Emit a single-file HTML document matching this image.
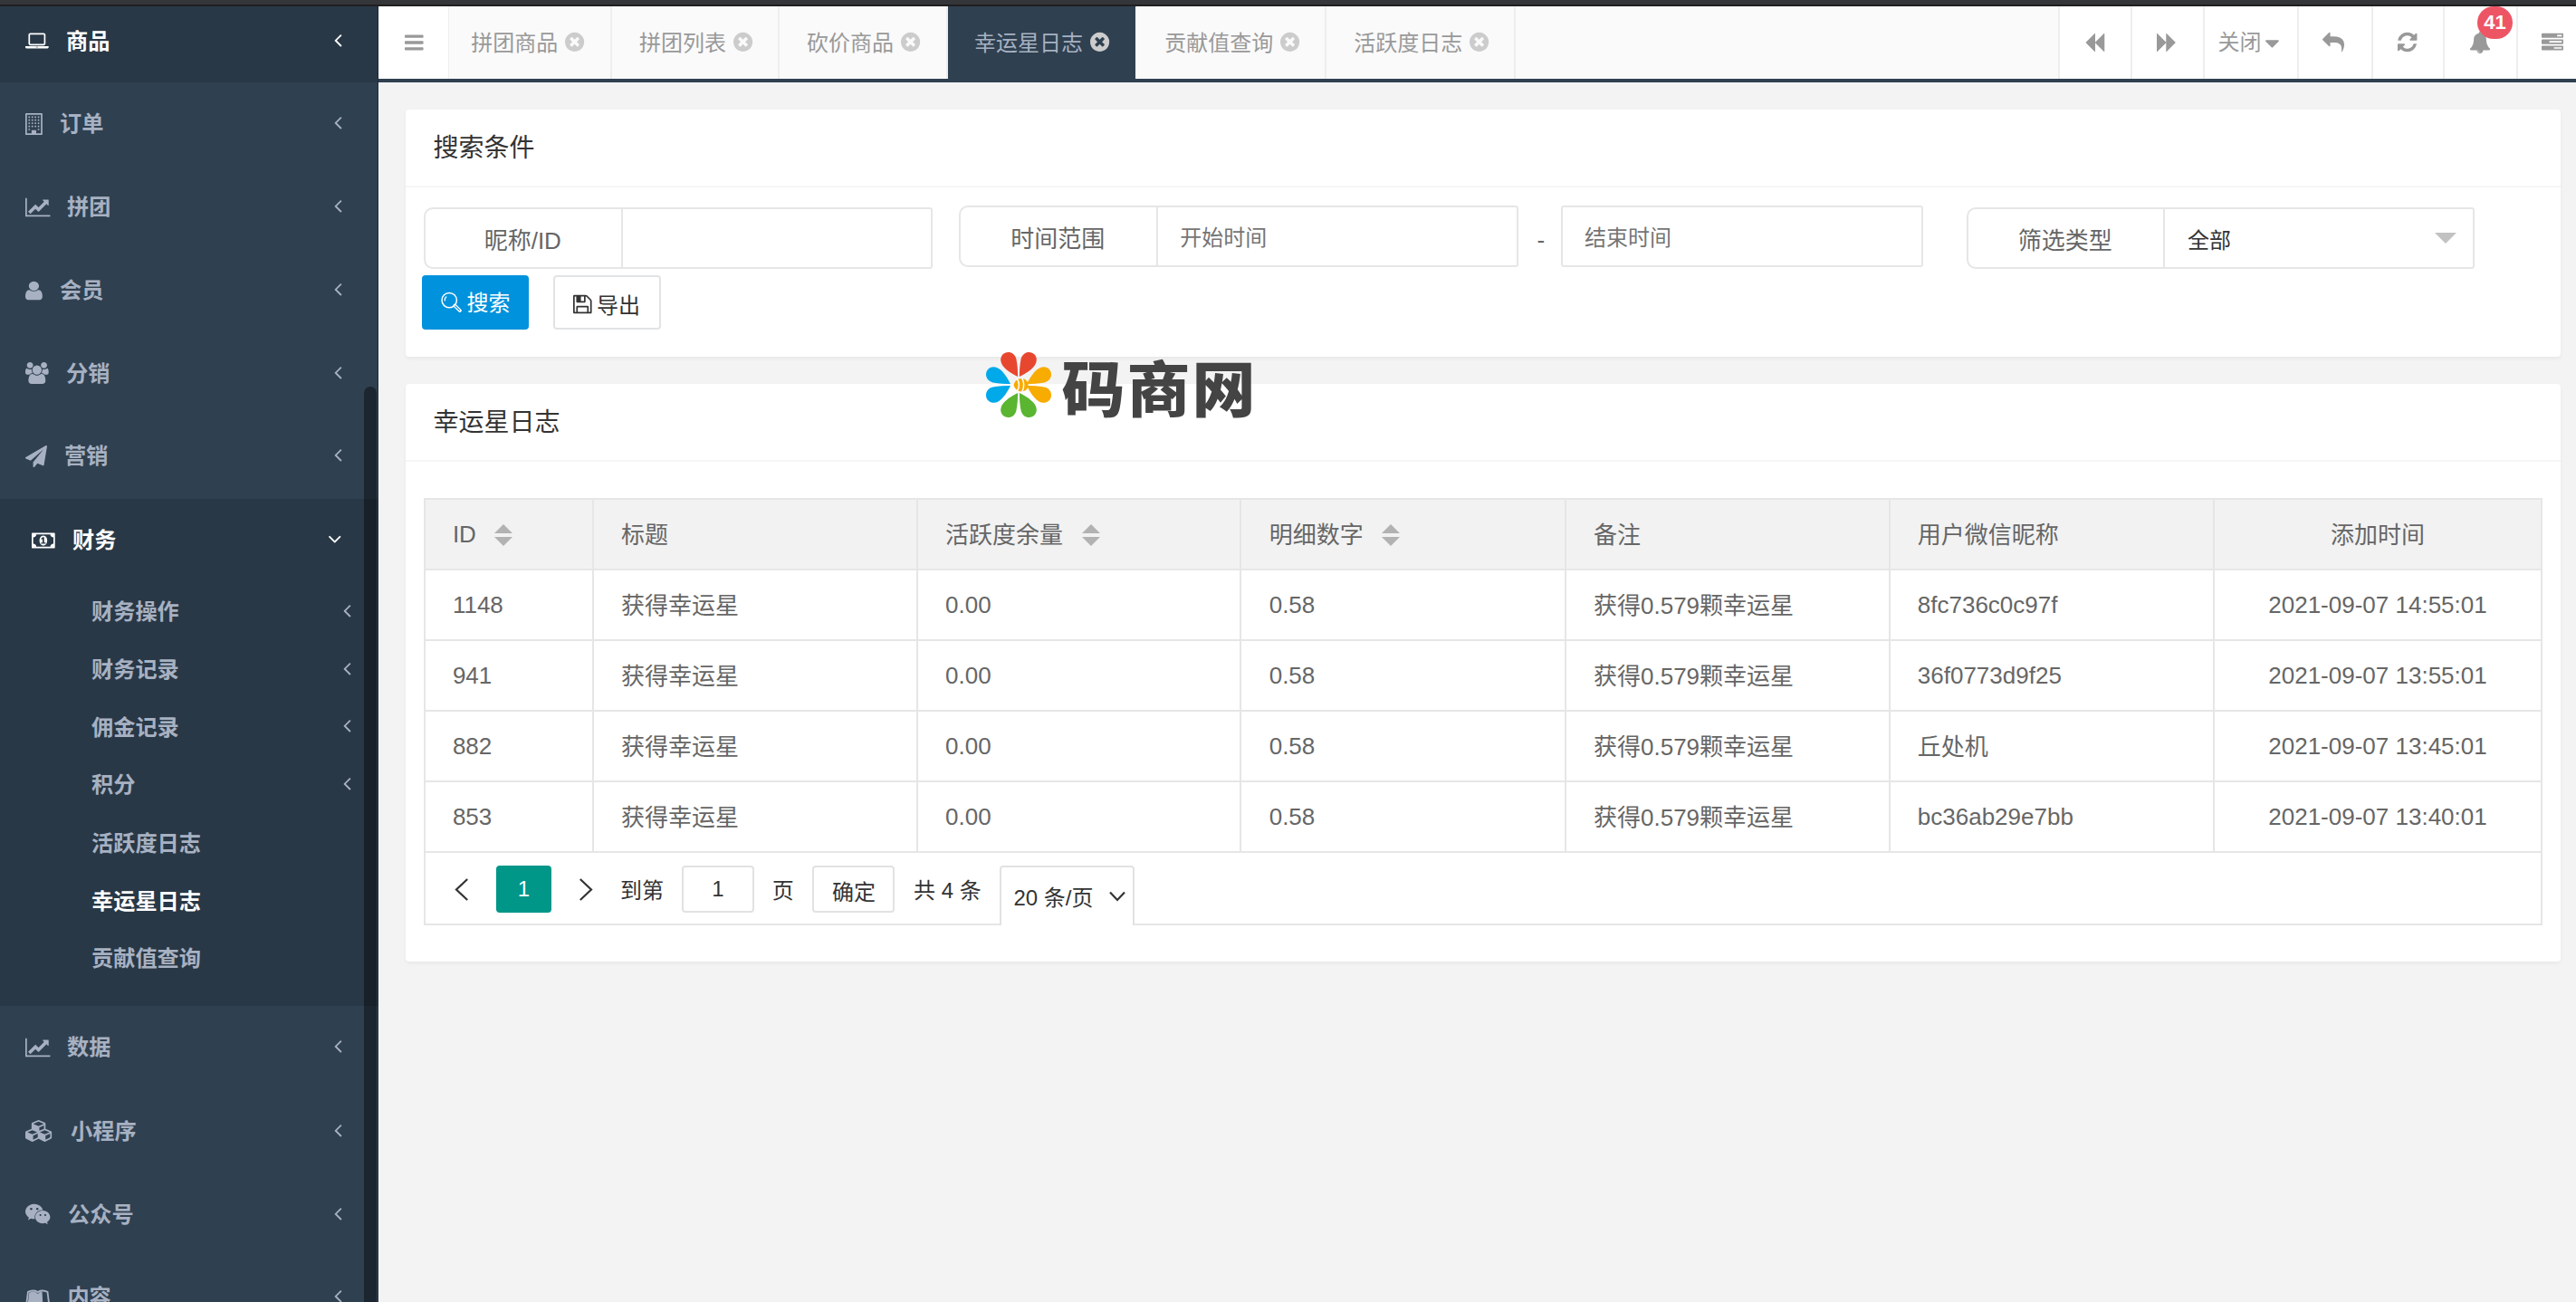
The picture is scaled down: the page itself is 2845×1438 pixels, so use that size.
<!DOCTYPE html>
<html lang="zh-CN"><head><meta charset="utf-8"><title>幸运星日志</title><style>
html,body{margin:0;padding:0;}
body{width:2845px;height:1438px;overflow:hidden;position:relative;background:#f3f3f4;font-family:"Liberation Sans","Noto Sans CJK SC",sans-serif;}
.b{position:absolute;}
.t{position:absolute;white-space:nowrap;margin:0;}
.bold{font-weight:bold;}
.ic{position:absolute;display:block;overflow:visible;}
</style></head><body>
<div class="b" style="left:0.0px;top:0.0px;width:2845.0px;height:7.0px;background:#1f1f1f;"></div>
<div class="b" style="left:0.0px;top:0.0px;width:2845.0px;height:5.1px;background:#35363a;"></div>
<div class="b" id="side" style="left:0;top:7px;width:418px;height:1431px;background:#2f4050;">
</div>
<div class="b" style="left:0.0px;top:7.0px;width:418.0px;height:84.0px;background:#293846;"></div>
<div class="b" style="left:0.0px;top:551.0px;width:418.0px;height:559.6px;background:#293846;"></div>
<svg class="ic" style="left:28.0px;top:32.9px;width:25.71px;height:24.00px;" preserveAspectRatio="none" viewBox="0 0 1920 1792"><path fill="#fff" transform="translate(0,1536) scale(1,-1)" d="M416 256q-66 0 -113 47t-47 113v704q0 66 47 113t113 47h1088q66 0 113 -47t47 -113v-704q0 -66 -47 -113t-113 -47h-1088zM384 1120v-704q0 -13 9.5 -22.5t22.5 -9.5h1088q13 0 22.5 9.5t9.5 22.5v704q0 13 -9.5 22.5t-22.5 9.5h-1088q-13 0 -22.5 -9.5t-9.5 -22.5z M1760 192h160v-96q0 -40 -47 -68t-113 -28h-1600q-66 0 -113 28t-47 68v96h160h1600zM1040 96q16 0 16 16t-16 16h-160q-16 0 -16 -16t16 -16h160z"/></svg>
<div class="t bold" style="left:73.0px;top:27.5px;height:36px;line-height:36px;font-size:24.2px;color:#fff;">商品</div>
<svg class="ic" style="left:369.3px;top:31.5px;width:8.57px;height:24.00px;" preserveAspectRatio="none" viewBox="0 0 640 1792"><path fill="#fff" transform="translate(0,1536) scale(1,-1)" d="M627 992q0 -13 -10 -23l-393 -393l393 -393q10 -10 10 -23t-10 -23l-50 -50q-10 -10 -23 -10t-23 10l-466 466q-10 10 -10 23t10 23l466 466q10 10 23 10t23 -10l50 -50q10 -10 10 -23z"/></svg>
<svg class="ic" style="left:28.0px;top:124.8px;width:18.86px;height:24.00px;" preserveAspectRatio="none" viewBox="0 0 1408 1792"><path fill="#a7b1c2" transform="translate(0,1536) scale(1,-1)" d="M384 224v-64q0 -13 -9.5 -22.5t-22.5 -9.5h-64q-13 0 -22.5 9.5t-9.5 22.5v64q0 13 9.5 22.5t22.5 9.5h64q13 0 22.5 -9.5t9.5 -22.5zM384 480v-64q0 -13 -9.5 -22.5t-22.5 -9.5h-64q-13 0 -22.5 9.5t-9.5 22.5v64q0 13 9.5 22.5t22.5 9.5h64q13 0 22.5 -9.5t9.5 -22.5z M640 480v-64q0 -13 -9.5 -22.5t-22.5 -9.5h-64q-13 0 -22.5 9.5t-9.5 22.5v64q0 13 9.5 22.5t22.5 9.5h64q13 0 22.5 -9.5t9.5 -22.5zM384 736v-64q0 -13 -9.5 -22.5t-22.5 -9.5h-64q-13 0 -22.5 9.5t-9.5 22.5v64q0 13 9.5 22.5t22.5 9.5h64q13 0 22.5 -9.5t9.5 -22.5z M1152 224v-64q0 -13 -9.5 -22.5t-22.5 -9.5h-64q-13 0 -22.5 9.5t-9.5 22.5v64q0 13 9.5 22.5t22.5 9.5h64q13 0 22.5 -9.5t9.5 -22.5zM896 480v-64q0 -13 -9.5 -22.5t-22.5 -9.5h-64q-13 0 -22.5 9.5t-9.5 22.5v64q0 13 9.5 22.5t22.5 9.5h64q13 0 22.5 -9.5t9.5 -22.5z M640 736v-64q0 -13 -9.5 -22.5t-22.5 -9.5h-64q-13 0 -22.5 9.5t-9.5 22.5v64q0 13 9.5 22.5t22.5 9.5h64q13 0 22.5 -9.5t9.5 -22.5zM384 992v-64q0 -13 -9.5 -22.5t-22.5 -9.5h-64q-13 0 -22.5 9.5t-9.5 22.5v64q0 13 9.5 22.5t22.5 9.5h64q13 0 22.5 -9.5t9.5 -22.5z M1152 480v-64q0 -13 -9.5 -22.5t-22.5 -9.5h-64q-13 0 -22.5 9.5t-9.5 22.5v64q0 13 9.5 22.5t22.5 9.5h64q13 0 22.5 -9.5t9.5 -22.5zM896 736v-64q0 -13 -9.5 -22.5t-22.5 -9.5h-64q-13 0 -22.5 9.5t-9.5 22.5v64q0 13 9.5 22.5t22.5 9.5h64q13 0 22.5 -9.5t9.5 -22.5z M640 992v-64q0 -13 -9.5 -22.5t-22.5 -9.5h-64q-13 0 -22.5 9.5t-9.5 22.5v64q0 13 9.5 22.5t22.5 9.5h64q13 0 22.5 -9.5t9.5 -22.5zM384 1248v-64q0 -13 -9.5 -22.5t-22.5 -9.5h-64q-13 0 -22.5 9.5t-9.5 22.5v64q0 13 9.5 22.5t22.5 9.5h64q13 0 22.5 -9.5t9.5 -22.5z M1152 736v-64q0 -13 -9.5 -22.5t-22.5 -9.5h-64q-13 0 -22.5 9.5t-9.5 22.5v64q0 13 9.5 22.5t22.5 9.5h64q13 0 22.5 -9.5t9.5 -22.5zM896 992v-64q0 -13 -9.5 -22.5t-22.5 -9.5h-64q-13 0 -22.5 9.5t-9.5 22.5v64q0 13 9.5 22.5t22.5 9.5h64q13 0 22.5 -9.5t9.5 -22.5z M640 1248v-64q0 -13 -9.5 -22.5t-22.5 -9.5h-64q-13 0 -22.5 9.5t-9.5 22.5v64q0 13 9.5 22.5t22.5 9.5h64q13 0 22.5 -9.5t9.5 -22.5zM1152 992v-64q0 -13 -9.5 -22.5t-22.5 -9.5h-64q-13 0 -22.5 9.5t-9.5 22.5v64q0 13 9.5 22.5t22.5 9.5h64q13 0 22.5 -9.5t9.5 -22.5z M896 1248v-64q0 -13 -9.5 -22.5t-22.5 -9.5h-64q-13 0 -22.5 9.5t-9.5 22.5v64q0 13 9.5 22.5t22.5 9.5h64q13 0 22.5 -9.5t9.5 -22.5zM1152 1248v-64q0 -13 -9.5 -22.5t-22.5 -9.5h-64q-13 0 -22.5 9.5t-9.5 22.5v64q0 13 9.5 22.5t22.5 9.5h64q13 0 22.5 -9.5t9.5 -22.5z M896 -128h384v1536h-1152v-1536h384v224q0 13 9.5 22.5t22.5 9.5h320q13 0 22.5 -9.5t9.5 -22.5v-224zM1408 1472v-1664q0 -26 -19 -45t-45 -19h-1280q-26 0 -45 19t-19 45v1664q0 26 19 45t45 19h1280q26 0 45 -19t19 -45z"/></svg>
<div class="t bold" style="left:66.0px;top:119.4px;height:36px;line-height:36px;font-size:24.2px;color:#a7b1c2;">订单</div>
<svg class="ic" style="left:369.3px;top:123.4px;width:8.57px;height:24.00px;" preserveAspectRatio="none" viewBox="0 0 640 1792"><path fill="#a7b1c2" transform="translate(0,1536) scale(1,-1)" d="M627 992q0 -13 -10 -23l-393 -393l393 -393q10 -10 10 -23t-10 -23l-50 -50q-10 -10 -23 -10t-23 10l-466 466q-10 10 -10 23t10 23l466 466q10 10 23 10t23 -10l50 -50q10 -10 10 -23z"/></svg>
<svg class="ic" style="left:28.0px;top:216.5px;width:27.43px;height:24.00px;" preserveAspectRatio="none" viewBox="0 0 2048 1792"><path fill="#a7b1c2" transform="translate(0,1536) scale(1,-1)" d="M2048 0v-128h-2048v1536h128v-1408h1920zM1920 1248v-435q0 -21 -19.5 -29.5t-35.5 7.5l-121 121l-633 -633q-10 -10 -23 -10t-23 10l-233 233l-416 -416l-192 192l585 585q10 10 23 10t23 -10l233 -233l464 464l-121 121q-16 16 -7.5 35.5t29.5 19.5h435q14 0 23 -9 t9 -23z"/></svg>
<div class="t bold" style="left:74.0px;top:211.1px;height:36px;line-height:36px;font-size:24.2px;color:#a7b1c2;">拼团</div>
<svg class="ic" style="left:369.3px;top:215.1px;width:8.57px;height:24.00px;" preserveAspectRatio="none" viewBox="0 0 640 1792"><path fill="#a7b1c2" transform="translate(0,1536) scale(1,-1)" d="M627 992q0 -13 -10 -23l-393 -393l393 -393q10 -10 10 -23t-10 -23l-50 -50q-10 -10 -23 -10t-23 10l-466 466q-10 10 -10 23t10 23l466 466q10 10 23 10t23 -10l50 -50q10 -10 10 -23z"/></svg>
<svg class="ic" style="left:28.0px;top:308.5px;width:18.86px;height:24.00px;" preserveAspectRatio="none" viewBox="0 0 1280 1792"><path fill="#a7b1c2" transform="translate(0,1536) scale(1,-1)" d="M1280 137q0 -109 -62.5 -187t-150.5 -78h-854q-88 0 -150.5 78t-62.5 187q0 85 8.5 160.5t31.5 152t58.5 131t94 89t134.5 34.5q131 -128 313 -128t313 128q76 0 134.5 -34.5t94 -89t58.5 -131t31.5 -152t8.5 -160.5zM1024 1024q0 -159 -112.5 -271.5t-271.5 -112.5 t-271.5 112.5t-112.5 271.5t112.5 271.5t271.5 112.5t271.5 -112.5t112.5 -271.5z"/></svg>
<div class="t bold" style="left:66.0px;top:303.1px;height:36px;line-height:36px;font-size:24.2px;color:#a7b1c2;">会员</div>
<svg class="ic" style="left:369.3px;top:307.1px;width:8.57px;height:24.00px;" preserveAspectRatio="none" viewBox="0 0 640 1792"><path fill="#a7b1c2" transform="translate(0,1536) scale(1,-1)" d="M627 992q0 -13 -10 -23l-393 -393l393 -393q10 -10 10 -23t-10 -23l-50 -50q-10 -10 -23 -10t-23 10l-466 466q-10 10 -10 23t10 23l466 466q10 10 23 10t23 -10l50 -50q10 -10 10 -23z"/></svg>
<svg class="ic" style="left:28.0px;top:400.2px;width:25.71px;height:24.00px;" preserveAspectRatio="none" viewBox="0 0 1920 1792"><path fill="#a7b1c2" transform="translate(0,1536) scale(1,-1)" d="M593 640q-162 -5 -265 -128h-134q-82 0 -138 40.5t-56 118.5q0 353 124 353q6 0 43.5 -21t97.5 -42.5t119 -21.5q67 0 133 23q-5 -37 -5 -66q0 -139 81 -256zM1664 3q0 -120 -73 -189.5t-194 -69.5h-874q-121 0 -194 69.5t-73 189.5q0 53 3.5 103.5t14 109t26.5 108.5 t43 97.5t62 81t85.5 53.5t111.5 20q10 0 43 -21.5t73 -48t107 -48t135 -21.5t135 21.5t107 48t73 48t43 21.5q61 0 111.5 -20t85.5 -53.5t62 -81t43 -97.5t26.5 -108.5t14 -109t3.5 -103.5zM640 1280q0 -106 -75 -181t-181 -75t-181 75t-75 181t75 181t181 75t181 -75 t75 -181zM1344 896q0 -159 -112.5 -271.5t-271.5 -112.5t-271.5 112.5t-112.5 271.5t112.5 271.5t271.5 112.5t271.5 -112.5t112.5 -271.5zM1920 671q0 -78 -56 -118.5t-138 -40.5h-134q-103 123 -265 128q81 117 81 256q0 29 -5 66q66 -23 133 -23q59 0 119 21.5t97.5 42.5 t43.5 21q124 0 124 -353zM1792 1280q0 -106 -75 -181t-181 -75t-181 75t-75 181t75 181t181 75t181 -75t75 -181z"/></svg>
<div class="t bold" style="left:73.0px;top:394.8px;height:36px;line-height:36px;font-size:24.2px;color:#a7b1c2;">分销</div>
<svg class="ic" style="left:369.3px;top:398.8px;width:8.57px;height:24.00px;" preserveAspectRatio="none" viewBox="0 0 640 1792"><path fill="#a7b1c2" transform="translate(0,1536) scale(1,-1)" d="M627 992q0 -13 -10 -23l-393 -393l393 -393q10 -10 10 -23t-10 -23l-50 -50q-10 -10 -23 -10t-23 10l-466 466q-10 10 -10 23t10 23l466 466q10 10 23 10t23 -10l50 -50q10 -10 10 -23z"/></svg>
<svg class="ic" style="left:28.0px;top:491.8px;width:24.00px;height:24.00px;" preserveAspectRatio="none" viewBox="0 0 1792 1792"><path fill="#a7b1c2" transform="translate(0,1536) scale(1,-1)" d="M1764 1525q33 -24 27 -64l-256 -1536q-5 -29 -32 -45q-14 -8 -31 -8q-11 0 -24 5l-453 185l-242 -295q-18 -23 -49 -23q-13 0 -22 4q-19 7 -30.5 23.5t-11.5 36.5v349l864 1059l-1069 -925l-395 162q-37 14 -40 55q-2 40 32 59l1664 960q15 9 32 9q20 0 36 -11z"/></svg>
<div class="t bold" style="left:71.0px;top:486.4px;height:36px;line-height:36px;font-size:24.2px;color:#a7b1c2;">营销</div>
<svg class="ic" style="left:369.3px;top:490.4px;width:8.57px;height:24.00px;" preserveAspectRatio="none" viewBox="0 0 640 1792"><path fill="#a7b1c2" transform="translate(0,1536) scale(1,-1)" d="M627 992q0 -13 -10 -23l-393 -393l393 -393q10 -10 10 -23t-10 -23l-50 -50q-10 -10 -23 -10t-23 10l-466 466q-10 10 -10 23t10 23l466 466q10 10 23 10t23 -10l50 -50q10 -10 10 -23z"/></svg>
<svg class="ic" style="left:35.0px;top:584.7px;width:25.71px;height:24.00px;" preserveAspectRatio="none" viewBox="0 0 1920 1792"><path fill="#fff" transform="translate(0,1536) scale(1,-1)" d="M768 384h384v96h-128v448h-114l-148 -137l77 -80q42 37 55 57h2v-288h-128v-96zM1280 640q0 -70 -21 -142t-59.5 -134t-101.5 -101t-138 -39t-138 39t-101.5 101t-59.5 134t-21 142t21 142t59.5 134t101.5 101t138 39t138 -39t101.5 -101t59.5 -134t21 -142zM1792 384 v512q-106 0 -181 75t-75 181h-1152q0 -106 -75 -181t-181 -75v-512q106 0 181 -75t75 -181h1152q0 106 75 181t181 75zM1920 1216v-1152q0 -26 -19 -45t-45 -19h-1792q-26 0 -45 19t-19 45v1152q0 26 19 45t45 19h1792q26 0 45 -19t19 -45z"/></svg>
<div class="t bold" style="left:80.0px;top:579.3px;height:36px;line-height:36px;font-size:24.2px;color:#fff;">财务</div>
<svg class="ic" style="left:361.6px;top:582.5px;width:15.43px;height:24.00px;" preserveAspectRatio="none" viewBox="0 0 1152 1792"><path fill="#fff" transform="translate(0,1536) scale(1,-1)" d="M1075 800q0 -13 -10 -23l-466 -466q-10 -10 -23 -10t-23 10l-466 466q-10 10 -10 23t10 23l50 50q10 10 23 10t23 -10l393 -393l393 393q10 10 23 10t23 -10l50 -50q10 -10 10 -23z"/></svg>
<svg class="ic" style="left:28.0px;top:1144.7px;width:27.43px;height:24.00px;" preserveAspectRatio="none" viewBox="0 0 2048 1792"><path fill="#a7b1c2" transform="translate(0,1536) scale(1,-1)" d="M2048 0v-128h-2048v1536h128v-1408h1920zM1920 1248v-435q0 -21 -19.5 -29.5t-35.5 7.5l-121 121l-633 -633q-10 -10 -23 -10t-23 10l-233 233l-416 -416l-192 192l585 585q10 10 23 10t23 -10l233 -233l464 464l-121 121q-16 16 -7.5 35.5t29.5 19.5h435q14 0 23 -9 t9 -23z"/></svg>
<div class="t bold" style="left:74.0px;top:1139.3px;height:36px;line-height:36px;font-size:24.2px;color:#a7b1c2;">数据</div>
<svg class="ic" style="left:369.3px;top:1143.3px;width:8.57px;height:24.00px;" preserveAspectRatio="none" viewBox="0 0 640 1792"><path fill="#a7b1c2" transform="translate(0,1536) scale(1,-1)" d="M627 992q0 -13 -10 -23l-393 -393l393 -393q10 -10 10 -23t-10 -23l-50 -50q-10 -10 -23 -10t-23 10l-466 466q-10 10 -10 23t10 23l466 466q10 10 23 10t23 -10l50 -50q10 -10 10 -23z"/></svg>
<svg class="ic" style="left:28.0px;top:1237.2px;width:30.86px;height:24.00px;" preserveAspectRatio="none" viewBox="0 0 2304 1792"><path fill="#a7b1c2" transform="translate(0,1536) scale(1,-1)" d="M640 -96l384 192v314l-384 -164v-342zM576 358l404 173l-404 173l-404 -173zM1664 -96l384 192v314l-384 -164v-342zM1600 358l404 173l-404 173l-404 -173zM1152 651l384 165v266l-384 -164v-267zM1088 1030l441 189l-441 189l-441 -189zM2176 512v-416q0 -36 -19 -67 t-52 -47l-448 -224q-25 -14 -57 -14t-57 14l-448 224q-4 2 -7 4q-2 -2 -7 -4l-448 -224q-25 -14 -57 -14t-57 14l-448 224q-33 16 -52 47t-19 67v416q0 38 21.5 70t56.5 48l434 186v400q0 38 21.5 70t56.5 48l448 192q23 10 50 10t50 -10l448 -192q35 -16 56.5 -48t21.5 -70 v-400l434 -186q36 -16 57 -48t21 -70z"/></svg>
<div class="t bold" style="left:78.0px;top:1231.8px;height:36px;line-height:36px;font-size:24.2px;color:#a7b1c2;">小程序</div>
<svg class="ic" style="left:369.3px;top:1235.8px;width:8.57px;height:24.00px;" preserveAspectRatio="none" viewBox="0 0 640 1792"><path fill="#a7b1c2" transform="translate(0,1536) scale(1,-1)" d="M627 992q0 -13 -10 -23l-393 -393l393 -393q10 -10 10 -23t-10 -23l-50 -50q-10 -10 -23 -10t-23 10l-466 466q-10 10 -10 23t10 23l466 466q10 10 23 10t23 -10l50 -50q10 -10 10 -23z"/></svg>
<svg class="ic" style="left:28.0px;top:1329.0px;width:27.43px;height:24.00px;" preserveAspectRatio="none" viewBox="0 0 2048 1792"><path fill="#a7b1c2" transform="translate(0,1536) scale(1,-1)" d="M580 1075q0 41 -25 66t-66 25q-43 0 -76 -25.5t-33 -65.5q0 -39 33 -64.5t76 -25.5q41 0 66 24.5t25 65.5zM1323 568q0 28 -25.5 50t-65.5 22q-27 0 -49.5 -22.5t-22.5 -49.5q0 -28 22.5 -50.5t49.5 -22.5q40 0 65.5 22t25.5 51zM1087 1075q0 41 -24.5 66t-65.5 25 q-43 0 -76 -25.5t-33 -65.5q0 -39 33 -64.5t76 -25.5q41 0 65.5 24.5t24.5 65.5zM1722 568q0 28 -26 50t-65 22q-27 0 -49.5 -22.5t-22.5 -49.5q0 -28 22.5 -50.5t49.5 -22.5q39 0 65 22t26 51zM1456 965q-31 4 -70 4q-169 0 -311 -77t-223.5 -208.5t-81.5 -287.5 q0 -78 23 -152q-35 -3 -68 -3q-26 0 -50 1.5t-55 6.5t-44.5 7t-54.5 10.5t-50 10.5l-253 -127l72 218q-290 203 -290 490q0 169 97.5 311t264 223.5t363.5 81.5q176 0 332.5 -66t262 -182.5t136.5 -260.5zM2048 404q0 -117 -68.5 -223.5t-185.5 -193.5l55 -181l-199 109 q-150 -37 -218 -37q-169 0 -311 70.5t-223.5 191.5t-81.5 264t81.5 264t223.5 191.5t311 70.5q161 0 303 -70.5t227.5 -192t85.5 -263.5z"/></svg>
<div class="t bold" style="left:75.0px;top:1323.6px;height:36px;line-height:36px;font-size:24.2px;color:#a7b1c2;">公众号</div>
<svg class="ic" style="left:369.3px;top:1327.6px;width:8.57px;height:24.00px;" preserveAspectRatio="none" viewBox="0 0 640 1792"><path fill="#a7b1c2" transform="translate(0,1536) scale(1,-1)" d="M627 992q0 -13 -10 -23l-393 -393l393 -393q10 -10 10 -23t-10 -23l-50 -50q-10 -10 -23 -10t-23 10l-466 466q-10 10 -10 23t10 23l466 466q10 10 23 10t23 -10l50 -50q10 -10 10 -23z"/></svg>
<svg class="ic" style="left:28.0px;top:1420.7px;width:27.43px;height:24.00px;" preserveAspectRatio="none" viewBox="0 0 2048 1792"><path fill="#a7b1c2" transform="translate(0,1536) scale(1,-1)" d="M1893 1144l155 -1272q-131 0 -257 57q-200 91 -393 91q-226 0 -374 -148q-148 148 -374 148q-193 0 -393 -91q-128 -57 -252 -57h-5l155 1272q224 127 482 127q233 0 387 -106q154 106 387 106q258 0 482 -127zM1398 157q129 0 232 -28.5t260 -93.5l-124 1021 q-171 78 -368 78q-224 0 -374 -141q-150 141 -374 141q-197 0 -368 -78l-124 -1021q105 43 165.5 65t148.5 39.5t178 17.5q202 0 374 -108q172 108 374 108zM1438 191l-55 907q-211 -4 -359 -155q-152 155 -374 155q-176 0 -336 -66l-114 -941q124 51 228.5 76t221.5 25 q209 0 374 -102q172 107 374 102z"/></svg>
<div class="t bold" style="left:74.4px;top:1415.3px;height:36px;line-height:36px;font-size:24.2px;color:#a7b1c2;">内容</div>
<svg class="ic" style="left:369.3px;top:1419.3px;width:8.57px;height:24.00px;" preserveAspectRatio="none" viewBox="0 0 640 1792"><path fill="#a7b1c2" transform="translate(0,1536) scale(1,-1)" d="M627 992q0 -13 -10 -23l-393 -393l393 -393q10 -10 10 -23t-10 -23l-50 -50q-10 -10 -23 -10t-23 10l-466 466q-10 10 -10 23t10 23l466 466q10 10 23 10t23 -10l50 -50q10 -10 10 -23z"/></svg>
<div class="t bold" style="left:101.0px;top:657.8px;height:36px;line-height:36px;font-size:24.2px;color:#a7b1c2;">财务操作</div>
<svg class="ic" style="left:378.8px;top:661.7px;width:8.57px;height:24.00px;" preserveAspectRatio="none" viewBox="0 0 640 1792"><path fill="#a7b1c2" transform="translate(0,1536) scale(1,-1)" d="M627 992q0 -13 -10 -23l-393 -393l393 -393q10 -10 10 -23t-10 -23l-50 -50q-10 -10 -23 -10t-23 10l-466 466q-10 10 -10 23t10 23l466 466q10 10 23 10t23 -10l50 -50q10 -10 10 -23z"/></svg>
<div class="t bold" style="left:101.0px;top:721.6px;height:36px;line-height:36px;font-size:24.2px;color:#a7b1c2;">财务记录</div>
<svg class="ic" style="left:378.8px;top:725.5px;width:8.57px;height:24.00px;" preserveAspectRatio="none" viewBox="0 0 640 1792"><path fill="#a7b1c2" transform="translate(0,1536) scale(1,-1)" d="M627 992q0 -13 -10 -23l-393 -393l393 -393q10 -10 10 -23t-10 -23l-50 -50q-10 -10 -23 -10t-23 10l-466 466q-10 10 -10 23t10 23l466 466q10 10 23 10t23 -10l50 -50q10 -10 10 -23z"/></svg>
<div class="t bold" style="left:101.0px;top:785.5px;height:36px;line-height:36px;font-size:24.2px;color:#a7b1c2;">佣金记录</div>
<svg class="ic" style="left:378.8px;top:789.4px;width:8.57px;height:24.00px;" preserveAspectRatio="none" viewBox="0 0 640 1792"><path fill="#a7b1c2" transform="translate(0,1536) scale(1,-1)" d="M627 992q0 -13 -10 -23l-393 -393l393 -393q10 -10 10 -23t-10 -23l-50 -50q-10 -10 -23 -10t-23 10l-466 466q-10 10 -10 23t10 23l466 466q10 10 23 10t23 -10l50 -50q10 -10 10 -23z"/></svg>
<div class="t bold" style="left:101.0px;top:849.4px;height:36px;line-height:36px;font-size:24.2px;color:#a7b1c2;">积分</div>
<svg class="ic" style="left:378.8px;top:853.3px;width:8.57px;height:24.00px;" preserveAspectRatio="none" viewBox="0 0 640 1792"><path fill="#a7b1c2" transform="translate(0,1536) scale(1,-1)" d="M627 992q0 -13 -10 -23l-393 -393l393 -393q10 -10 10 -23t-10 -23l-50 -50q-10 -10 -23 -10t-23 10l-466 466q-10 10 -10 23t10 23l466 466q10 10 23 10t23 -10l50 -50q10 -10 10 -23z"/></svg>
<div class="t bold" style="left:101.0px;top:914.1px;height:36px;line-height:36px;font-size:24.2px;color:#a7b1c2;">活跃度日志</div>
<div class="t bold" style="left:101.0px;top:977.8px;height:36px;line-height:36px;font-size:24.2px;color:#fff;">幸运星日志</div>
<div class="t bold" style="left:101.0px;top:1041.3px;height:36px;line-height:36px;font-size:24.2px;color:#a7b1c2;">贡献值查询</div>
<div class="b" style="left:402.2px;top:426.7px;width:13.8px;height:1033.3px;background:rgba(0,0,0,.4);border-radius:7px;"></div>
<div class="b" style="left:416.8px;top:7.0px;width:1.2px;height:1431.0px;background:rgba(10,25,45,.45);"></div>
<div class="b" style="left:418.0px;top:91.0px;width:1.1px;height:1347.0px;background:#fff;"></div>
<div class="b" style="left:418.0px;top:7.0px;width:2427.0px;height:80.0px;background:#fafafa;"></div>
<div class="b" style="left:418.0px;top:86.6px;width:2427.0px;height:4.4px;background:#2f4050;"></div>
<div class="b" style="left:418.0px;top:7.0px;width:77.0px;height:79.6px;background:#fff;border-right:2px solid #eee;"></div>
<svg class="ic" style="left:446.8px;top:34.6px;width:20.57px;height:24.00px;" preserveAspectRatio="none" viewBox="0 0 1536 1792"><path fill="#999" transform="translate(0,1536) scale(1,-1)" d="M1536 192v-128q0 -26 -19 -45t-45 -19h-1408q-26 0 -45 19t-19 45v128q0 26 19 45t45 19h1408q26 0 45 -19t19 -45zM1536 704v-128q0 -26 -19 -45t-45 -19h-1408q-26 0 -45 19t-19 45v128q0 26 19 45t45 19h1408q26 0 45 -19t19 -45zM1536 1216v-128q0 -26 -19 -45 t-45 -19h-1408q-26 0 -45 19t-19 45v128q0 26 19 45t45 19h1408q26 0 45 -19t19 -45z"/></svg>
<div class="b" style="left:496.4px;top:7.0px;width:179.5px;height:79.6px;background:#fafafa;border-right:2px solid #eee;box-sizing:border-box;"></div>
<div class="t " style="left:520.3px;top:30.1px;height:36px;line-height:36px;font-size:24px;color:#999;">拼团商品</div>
<svg class="ic" style="left:624.1px;top:34.2px;width:21.17px;height:24.70px;" preserveAspectRatio="none" viewBox="0 0 1536 1792"><path fill="#ccc" transform="translate(0,1536) scale(1,-1)" d="M1149 414q0 26 -19 45l-181 181l181 181q19 19 19 45q0 27 -19 46l-90 90q-19 19 -46 19q-26 0 -45 -19l-181 -181l-181 181q-19 19 -45 19q-27 0 -46 -19l-90 -90q-19 -19 -19 -46q0 -26 19 -45l181 -181l-181 -181q-19 -19 -19 -45q0 -27 19 -46l90 -90q19 -19 46 -19 q26 0 45 19l181 181l181 -181q19 -19 45 -19q27 0 46 19l90 90q19 19 19 46zM1536 640q0 -209 -103 -385.5t-279.5 -279.5t-385.5 -103t-385.5 103t-279.5 279.5t-103 385.5t103 385.5t279.5 279.5t385.5 103t385.5 -103t279.5 -279.5t103 -385.5z"/></svg>
<div class="b" style="left:675.9px;top:7.0px;width:184.7px;height:79.6px;background:#fafafa;border-right:2px solid #eee;box-sizing:border-box;"></div>
<div class="t " style="left:706.0px;top:30.1px;height:36px;line-height:36px;font-size:24px;color:#999;">拼团列表</div>
<svg class="ic" style="left:809.8px;top:34.2px;width:21.17px;height:24.70px;" preserveAspectRatio="none" viewBox="0 0 1536 1792"><path fill="#ccc" transform="translate(0,1536) scale(1,-1)" d="M1149 414q0 26 -19 45l-181 181l181 181q19 19 19 45q0 27 -19 46l-90 90q-19 19 -46 19q-26 0 -45 -19l-181 -181l-181 181q-19 19 -45 19q-27 0 -46 -19l-90 -90q-19 -19 -19 -46q0 -26 19 -45l181 -181l-181 -181q-19 -19 -19 -45q0 -27 19 -46l90 -90q19 -19 46 -19 q26 0 45 19l181 181l181 -181q19 -19 45 -19q27 0 46 19l90 90q19 19 19 46zM1536 640q0 -209 -103 -385.5t-279.5 -279.5t-385.5 -103t-385.5 103t-279.5 279.5t-103 385.5t103 385.5t279.5 279.5t385.5 103t385.5 -103t279.5 -279.5t103 -385.5z"/></svg>
<div class="b" style="left:860.6px;top:7.0px;width:186.2px;height:79.6px;background:#fafafa;border-right:2px solid #eee;box-sizing:border-box;"></div>
<div class="t " style="left:891.0px;top:30.1px;height:36px;line-height:36px;font-size:24px;color:#999;">砍价商品</div>
<svg class="ic" style="left:994.8px;top:34.2px;width:21.17px;height:24.70px;" preserveAspectRatio="none" viewBox="0 0 1536 1792"><path fill="#ccc" transform="translate(0,1536) scale(1,-1)" d="M1149 414q0 26 -19 45l-181 181l181 181q19 19 19 45q0 27 -19 46l-90 90q-19 19 -46 19q-26 0 -45 -19l-181 -181l-181 181q-19 19 -45 19q-27 0 -46 -19l-90 -90q-19 -19 -19 -46q0 -26 19 -45l181 -181l-181 -181q-19 -19 -19 -45q0 -27 19 -46l90 -90q19 -19 46 -19 q26 0 45 19l181 181l181 -181q19 -19 45 -19q27 0 46 19l90 90q19 19 19 46zM1536 640q0 -209 -103 -385.5t-279.5 -279.5t-385.5 -103t-385.5 103t-279.5 279.5t-103 385.5t103 385.5t279.5 279.5t385.5 103t385.5 -103t279.5 -279.5t103 -385.5z"/></svg>
<div class="b" style="left:1046.8px;top:7.0px;width:207.0px;height:84.0px;background:#2f4050;"></div>
<div class="t " style="left:1076.0px;top:30.1px;height:36px;line-height:36px;font-size:24px;color:#a7b1c2;">幸运星日志</div>
<svg class="ic" style="left:1203.8px;top:34.2px;width:21.17px;height:24.70px;" preserveAspectRatio="none" viewBox="0 0 1536 1792"><path fill="#ccc" transform="translate(0,1536) scale(1,-1)" d="M1149 414q0 26 -19 45l-181 181l181 181q19 19 19 45q0 27 -19 46l-90 90q-19 19 -46 19q-26 0 -45 -19l-181 -181l-181 181q-19 19 -45 19q-27 0 -46 -19l-90 -90q-19 -19 -19 -46q0 -26 19 -45l181 -181l-181 -181q-19 -19 -19 -45q0 -27 19 -46l90 -90q19 -19 46 -19 q26 0 45 19l181 181l181 -181q19 -19 45 -19q27 0 46 19l90 90q19 19 19 46zM1536 640q0 -209 -103 -385.5t-279.5 -279.5t-385.5 -103t-385.5 103t-279.5 279.5t-103 385.5t103 385.5t279.5 279.5t385.5 103t385.5 -103t279.5 -279.5t103 -385.5z"/></svg>
<div class="b" style="left:1253.8px;top:7.0px;width:211.0px;height:79.6px;background:#fafafa;border-right:2px solid #eee;box-sizing:border-box;"></div>
<div class="t " style="left:1286.2px;top:30.1px;height:36px;line-height:36px;font-size:24px;color:#999;">贡献值查询</div>
<svg class="ic" style="left:1414.0px;top:34.2px;width:21.17px;height:24.70px;" preserveAspectRatio="none" viewBox="0 0 1536 1792"><path fill="#ccc" transform="translate(0,1536) scale(1,-1)" d="M1149 414q0 26 -19 45l-181 181l181 181q19 19 19 45q0 27 -19 46l-90 90q-19 19 -46 19q-26 0 -45 -19l-181 -181l-181 181q-19 19 -45 19q-27 0 -46 -19l-90 -90q-19 -19 -19 -46q0 -26 19 -45l181 -181l-181 -181q-19 -19 -19 -45q0 -27 19 -46l90 -90q19 -19 46 -19 q26 0 45 19l181 181l181 -181q19 -19 45 -19q27 0 46 19l90 90q19 19 19 46zM1536 640q0 -209 -103 -385.5t-279.5 -279.5t-385.5 -103t-385.5 103t-279.5 279.5t-103 385.5t103 385.5t279.5 279.5t385.5 103t385.5 -103t279.5 -279.5t103 -385.5z"/></svg>
<div class="b" style="left:1464.8px;top:7.0px;width:209.4px;height:79.6px;background:#fafafa;border-right:2px solid #eee;box-sizing:border-box;"></div>
<div class="t " style="left:1495.3px;top:30.1px;height:36px;line-height:36px;font-size:24px;color:#999;">活跃度日志</div>
<svg class="ic" style="left:1623.1px;top:34.2px;width:21.17px;height:24.70px;" preserveAspectRatio="none" viewBox="0 0 1536 1792"><path fill="#ccc" transform="translate(0,1536) scale(1,-1)" d="M1149 414q0 26 -19 45l-181 181l181 181q19 19 19 45q0 27 -19 46l-90 90q-19 19 -46 19q-26 0 -45 -19l-181 -181l-181 181q-19 19 -45 19q-27 0 -46 -19l-90 -90q-19 -19 -19 -46q0 -26 19 -45l181 -181l-181 -181q-19 -19 -19 -45q0 -27 19 -46l90 -90q19 -19 46 -19 q26 0 45 19l181 181l181 -181q19 -19 45 -19q27 0 46 19l90 90q19 19 19 46zM1536 640q0 -209 -103 -385.5t-279.5 -279.5t-385.5 -103t-385.5 103t-279.5 279.5t-103 385.5t103 385.5t279.5 279.5t385.5 103t385.5 -103t279.5 -279.5t103 -385.5z"/></svg>
<div class="b" style="left:2273.0px;top:7.0px;width:80.0px;height:79.6px;background:#fff;border-left:2px solid #eee;box-sizing:border-box;"></div>
<div class="b" style="left:2353.0px;top:7.0px;width:80.0px;height:79.6px;background:#fff;border-left:2px solid #eee;box-sizing:border-box;"></div>
<div class="b" style="left:2433.0px;top:7.0px;width:104.0px;height:79.6px;background:#fff;border-left:2px solid #eee;box-sizing:border-box;"></div>
<div class="b" style="left:2537.0px;top:7.0px;width:81.6px;height:79.6px;background:#fff;border-left:2px solid #eee;box-sizing:border-box;"></div>
<div class="b" style="left:2618.6px;top:7.0px;width:79.4px;height:79.6px;background:#fff;border-left:2px solid #eee;box-sizing:border-box;"></div>
<div class="b" style="left:2698.0px;top:7.0px;width:81.0px;height:79.6px;background:#fff;border-left:2px solid #eee;box-sizing:border-box;"></div>
<div class="b" style="left:2779.0px;top:7.0px;width:66.0px;height:79.6px;background:#fff;border-left:2px solid #eee;box-sizing:border-box;"></div>
<svg class="ic" style="left:2301.7px;top:34.6px;width:22.29px;height:24.00px;" preserveAspectRatio="none" viewBox="0 0 1664 1792"><path fill="#999" transform="translate(0,1536) scale(1,-1)" d="M1619 1395q19 19 32 13t13 -32v-1472q0 -26 -13 -32t-32 13l-710 710q-9 9 -13 19v-710q0 -26 -13 -32t-32 13l-710 710q-19 19 -19 45t19 45l710 710q19 19 32 13t13 -32v-710q4 10 13 19z"/></svg>
<svg class="ic" style="left:2381.6px;top:34.6px;width:22.29px;height:24.00px;" preserveAspectRatio="none" viewBox="0 0 1664 1792"><path fill="#999" transform="translate(0,1536) scale(1,-1)" d="M45 -115q-19 -19 -32 -13t-13 32v1472q0 26 13 32t32 -13l710 -710q9 -9 13 -19v710q0 26 13 32t32 -13l710 -710q19 -19 19 -45t-19 -45l-710 -710q-19 -19 -32 -13t-13 32v710q-4 -10 -13 -19z"/></svg>
<div class="t " style="left:2449.5px;top:29.4px;height:36px;line-height:36px;font-size:24px;color:#999;">关闭</div>
<svg class="ic" style="left:2502.3px;top:34.6px;width:14.86px;height:26.00px;" preserveAspectRatio="none" viewBox="0 0 1024 1792"><path fill="#999" transform="translate(0,1536) scale(1,-1)" d="M1024 832q0 -26 -19 -45l-448 -448q-19 -19 -45 -19t-45 19l-448 448q-19 19 -19 45t19 45t45 19h896q26 0 45 -19t19 -45z"/></svg>
<svg class="ic" style="left:2565.2px;top:34.6px;width:24.00px;height:24.00px;" preserveAspectRatio="none" viewBox="0 0 1792 1792"><path fill="#999" transform="translate(0,1536) scale(1,-1)" d="M1792 416q0 -166 -127 -451q-3 -7 -10.5 -24t-13.5 -30t-13 -22q-12 -17 -28 -17q-15 0 -23.5 10t-8.5 25q0 9 2.5 26.5t2.5 23.5q5 68 5 123q0 101 -17.5 181t-48.5 138.5t-80 101t-105.5 69.5t-133 42.5t-154 21.5t-175.5 6h-224v-256q0 -26 -19 -45t-45 -19t-45 19 l-512 512q-19 19 -19 45t19 45l512 512q19 19 45 19t45 -19t19 -45v-256h224q713 0 875 -403q53 -134 53 -333z"/></svg>
<svg class="ic" style="left:2647.7px;top:34.1px;width:21.43px;height:25.00px;" preserveAspectRatio="none" viewBox="0 0 1536 1792"><path fill="#999" transform="translate(0,1536) scale(1,-1)" d="M1511 480q0 -5 -1 -7q-64 -268 -268 -434.5t-478 -166.5q-146 0 -282.5 55t-243.5 157l-129 -129q-19 -19 -45 -19t-45 19t-19 45v448q0 26 19 45t45 19h448q26 0 45 -19t19 -45t-19 -45l-137 -137q71 -66 161 -102t187 -36q134 0 250 65t186 179q11 17 53 117 q8 23 30 23h192q13 0 22.5 -9.5t9.5 -22.5zM1536 1280v-448q0 -26 -19 -45t-45 -19h-448q-26 0 -45 19t-19 45t19 45l138 138q-148 137 -349 137q-134 0 -250 -65t-186 -179q-11 -17 -53 -117q-8 -23 -30 -23h-199q-13 0 -22.5 9.5t-9.5 22.5v7q65 268 270 434.5t480 166.5 q146 0 284 -55.5t245 -156.5l130 129q19 19 45 19t45 -19t19 -45z"/></svg>
<svg class="ic" style="left:2726.8px;top:34.6px;width:24.00px;height:24.00px;" preserveAspectRatio="none" viewBox="0 0 1792 1792"><path fill="#999" transform="translate(0,1536) scale(1,-1)" d="M912 -160q0 16 -16 16q-59 0 -101.5 42.5t-42.5 101.5q0 16 -16 16t-16 -16q0 -73 51.5 -124.5t124.5 -51.5q16 0 16 16zM1728 128q0 -52 -38 -90t-90 -38h-448q0 -106 -75 -181t-181 -75t-181 75t-75 181h-448q-52 0 -90 38t-38 90q50 42 91 88t85 119.5t74.5 158.5 t50 206t19.5 260q0 152 117 282.5t307 158.5q-8 19 -8 39q0 40 28 68t68 28t68 -28t28 -68q0 -20 -8 -39q190 -28 307 -158.5t117 -282.5q0 -139 19.5 -260t50 -206t74.5 -158.5t85 -119.5t91 -88z"/></svg>
<svg class="ic" style="left:2806.9px;top:34.6px;width:24.00px;height:24.00px;" preserveAspectRatio="none" viewBox="0 0 1792 1792"><path fill="#999" transform="translate(0,1536) scale(1,-1)" d="M1024 128h640v128h-640v-128zM640 640h1024v128h-1024v-128zM1280 1152h384v128h-384v-128zM1792 320v-256q0 -26 -19 -45t-45 -19h-1664q-26 0 -45 19t-19 45v256q0 26 19 45t45 19h1664q26 0 45 -19t19 -45zM1792 832v-256q0 -26 -19 -45t-45 -19h-1664q-26 0 -45 19 t-19 45v256q0 26 19 45t45 19h1664q26 0 45 -19t19 -45zM1792 1344v-256q0 -26 -19 -45t-45 -19h-1664q-26 0 -45 19t-19 45v256q0 26 19 45t45 19h1664q26 0 45 -19t19 -45z"/></svg>
<div class="t bold" style="left:2736.1px;top:7px;width:38.7px;height:36px;line-height:35px;border-radius:18px;background:#ed5565;color:#fff;font-size:22px;text-align:center;">41</div>
<div class="b" style="left:418.0px;top:91.0px;width:2427.0px;height:1347.0px;background:#f3f3f4;z-index:-1;"></div>
<div class="b" style="left:448.0px;top:121.0px;width:2380.0px;height:273.0px;background:#fff;border-radius:4px;box-shadow:0 2px 4px rgba(0,0,0,.05);"></div>
<div class="b" style="left:448.0px;top:205.0px;width:2380.0px;height:2.0px;background:#f6f6f6;"></div>
<div class="t " style="left:478.5px;top:142.6px;height:42px;line-height:42px;font-size:28px;color:#333;">搜索条件</div>
<div class="b" style="left:468.0px;top:228.8px;width:562.0px;height:68.2px;border:2px solid #e6e6e6;border-radius:10px 3px 3px 10px;box-sizing:border-box;background:#fff;"></div><div class="b" style="left:685.6px;top:228.8px;width:2.0px;height:68.2px;background:#e6e6e6;"></div><div class="t " style="left:468.0px;top:246.6px;height:39px;line-height:39px;font-size:26px;color:#666;width:218.6px;text-align:center;">昵称/ID</div>
<div class="b" style="left:1058.8px;top:227.1px;width:618.0px;height:67.9px;border:2px solid #e6e6e6;border-radius:10px 3px 3px 10px;box-sizing:border-box;background:#fff;"></div><div class="b" style="left:1276.6px;top:227.1px;width:2.0px;height:67.9px;background:#e6e6e6;"></div><div class="t " style="left:1058.8px;top:245.0px;height:39px;line-height:39px;font-size:26px;color:#666;width:218.8px;text-align:center;">时间范围</div>
<div class="t " style="left:1303.3px;top:244.6px;height:36px;line-height:36px;font-size:24px;color:#757575;">开始时间</div>
<div class="t " style="left:1697.5px;top:245.5px;height:39px;line-height:39px;font-size:26px;color:#666;">-</div>
<div class="b" style="left:1724.1px;top:227.1px;width:400.1px;height:67.9px;border:2px solid #e6e6e6;border-radius:3px;box-sizing:border-box;background:#fff;"></div>
<div class="t " style="left:1750.0px;top:244.6px;height:36px;line-height:36px;font-size:24px;color:#757575;">结束时间</div>
<div class="b" style="left:2171.5px;top:228.8px;width:561.8px;height:68.2px;border:2px solid #e6e6e6;border-radius:10px 3px 3px 10px;box-sizing:border-box;background:#fff;"></div><div class="b" style="left:2389.0px;top:228.8px;width:2.0px;height:68.2px;background:#e6e6e6;"></div><div class="t " style="left:2171.5px;top:246.6px;height:39px;line-height:39px;font-size:26px;color:#666;width:218.5px;text-align:center;">筛选类型</div>
<div class="t " style="left:2416.0px;top:248.1px;height:36px;line-height:36px;font-size:24px;color:#333;">全部</div>
<div class="b" style="left:2689.4px;top:256.5px;width:0;height:0;border-left:12px solid transparent;border-right:12px solid transparent;border-top:12px solid #c2c2c2;"></div>
<div class="b" style="left:466.0px;top:304.0px;width:117.9px;height:59.8px;background:#0092dc;border-radius:4px;"></div>
<svg class="ic" style="left:486px;top:321px;width:26px;height:26px;" viewBox="0 0 26 26"><circle cx="10.2" cy="10.6" r="8.2" fill="none" stroke="#fff" stroke-width="1.5"/><path d="M16.2 16.4 L22 22.1" stroke="#fff" stroke-width="3.6" stroke-linecap="round"/><path d="M16.8 17 L21.6 21.7" stroke="#0092dc" stroke-width="1.1" stroke-linecap="round"/><path d="M5.3 11.5a4.9 4.9 0 0 1 1.9-5" fill="none" stroke="#fff" stroke-width="1.2"/></svg>
<div class="t " style="left:515.6px;top:317.3px;height:36px;line-height:36px;font-size:24px;color:#fff;">搜索</div>
<div class="b" style="left:611.0px;top:304.0px;width:118.6px;height:59.8px;background:#fff;border:2px solid #e2e3e5;border-radius:4px;box-sizing:border-box;"></div>
<svg class="ic" style="left:632.8px;top:323.5px;width:20.57px;height:24.00px;" preserveAspectRatio="none" viewBox="0 0 1536 1792"><path fill="#333" transform="translate(0,1536) scale(1,-1)" d="M384 0h768v384h-768v-384zM1280 0h128v896q0 14 -10 38.5t-20 34.5l-281 281q-10 10 -34 20t-39 10v-416q0 -40 -28 -68t-68 -28h-576q-40 0 -68 28t-28 68v416h-128v-1280h128v416q0 40 28 68t68 28h832q40 0 68 -28t28 -68v-416zM896 928v320q0 13 -9.5 22.5t-22.5 9.5 h-192q-13 0 -22.5 -9.5t-9.5 -22.5v-320q0 -13 9.5 -22.5t22.5 -9.5h192q13 0 22.5 9.5t9.5 22.5zM1536 896v-928q0 -40 -28 -68t-68 -28h-1344q-40 0 -68 28t-28 68v1344q0 40 28 68t68 28h928q40 0 88 -20t76 -48l280 -280q28 -28 48 -76t20 -88z"/></svg>
<div class="t " style="left:659.1px;top:319.6px;height:36px;line-height:36px;font-size:24px;color:#333;">导出</div>
<div class="b" style="left:448.0px;top:423.7px;width:2380.0px;height:638.3px;background:#fff;border-radius:4px;box-shadow:0 2px 4px rgba(0,0,0,.05);"></div>
<div class="b" style="left:448.0px;top:508.0px;width:2380.0px;height:2.0px;background:#f6f6f6;"></div>
<div class="t " style="left:478.5px;top:445.8px;height:42px;line-height:42px;font-size:28px;color:#333;">幸运星日志</div>
<div class="b" style="left:468.0px;top:550.0px;width:2340.2px;height:472.0px;border:2px solid #e6e6e6;box-sizing:border-box;background:#fff;"></div>
<div class="b" style="left:470.0px;top:552.0px;width:2336.2px;height:76.0px;background:#f2f2f2;"></div>
<div class="b" style="left:468.0px;top:628.0px;width:2340.2px;height:2.0px;background:#e6e6e6;"></div>
<div class="b" style="left:468.0px;top:706.0px;width:2340.2px;height:2.0px;background:#e6e6e6;"></div>
<div class="b" style="left:468.0px;top:784.0px;width:2340.2px;height:2.0px;background:#e6e6e6;"></div>
<div class="b" style="left:468.0px;top:862.0px;width:2340.2px;height:2.0px;background:#e6e6e6;"></div>
<div class="b" style="left:468.0px;top:940.0px;width:2340.2px;height:2.0px;background:#e6e6e6;"></div>
<div class="b" style="left:654.0px;top:550.0px;width:2.0px;height:392.0px;background:#e6e6e6;"></div>
<div class="b" style="left:1012.0px;top:550.0px;width:2.0px;height:392.0px;background:#e6e6e6;"></div>
<div class="b" style="left:1369.0px;top:550.0px;width:2.0px;height:392.0px;background:#e6e6e6;"></div>
<div class="b" style="left:1728.0px;top:550.0px;width:2.0px;height:392.0px;background:#e6e6e6;"></div>
<div class="b" style="left:2086.0px;top:550.0px;width:2.0px;height:392.0px;background:#e6e6e6;"></div>
<div class="b" style="left:2444.0px;top:550.0px;width:2.0px;height:392.0px;background:#e6e6e6;"></div>
<div class="t " style="left:499.9px;top:570.8px;height:39px;line-height:39px;font-size:26px;color:#666;">ID</div>
<div class="t " style="left:686.0px;top:572.1px;height:39px;line-height:39px;font-size:26px;color:#666;">标题</div>
<div class="t " style="left:1044.0px;top:572.1px;height:39px;line-height:39px;font-size:26px;color:#666;">活跃度余量</div>
<div class="t " style="left:1401.7px;top:572.1px;height:39px;line-height:39px;font-size:26px;color:#666;">明细数字</div>
<div class="t " style="left:1760.0px;top:572.1px;height:39px;line-height:39px;font-size:26px;color:#666;">备注</div>
<div class="t " style="left:2117.8px;top:572.1px;height:39px;line-height:39px;font-size:26px;color:#666;">用户微信昵称</div>
<div class="t " style="left:2444.8px;top:572.1px;height:39px;line-height:39px;font-size:26px;color:#666;width:362.4px;text-align:center;">添加时间</div>
<div class="b" style="left:545.9px;top:579px;border-left:10px solid transparent;border-right:10px solid transparent;border-bottom:10px solid #b2b2b2;width:0;height:0;"></div><div class="b" style="left:545.9px;top:593px;border-left:10px solid transparent;border-right:10px solid transparent;border-top:10px solid #b2b2b2;width:0;height:0;"></div>
<div class="b" style="left:1194.5px;top:579px;border-left:10px solid transparent;border-right:10px solid transparent;border-bottom:10px solid #b2b2b2;width:0;height:0;"></div><div class="b" style="left:1194.5px;top:593px;border-left:10px solid transparent;border-right:10px solid transparent;border-top:10px solid #b2b2b2;width:0;height:0;"></div>
<div class="b" style="left:1526px;top:579px;border-left:10px solid transparent;border-right:10px solid transparent;border-bottom:10px solid #b2b2b2;width:0;height:0;"></div><div class="b" style="left:1526px;top:593px;border-left:10px solid transparent;border-right:10px solid transparent;border-top:10px solid #b2b2b2;width:0;height:0;"></div>
<div class="t " style="left:499.9px;top:648.5px;height:39px;line-height:39px;font-size:26px;color:#666;">1148</div>
<div class="t " style="left:686.0px;top:649.8px;height:39px;line-height:39px;font-size:26px;color:#666;">获得幸运星</div>
<div class="t " style="left:1044.0px;top:648.5px;height:39px;line-height:39px;font-size:26px;color:#666;">0.00</div>
<div class="t " style="left:1401.7px;top:648.5px;height:39px;line-height:39px;font-size:26px;color:#666;">0.58</div>
<div class="t " style="left:1760.0px;top:649.8px;height:39px;line-height:39px;font-size:26px;color:#666;">获得0.579颗幸运星</div>
<div class="t " style="left:2117.8px;top:648.5px;height:39px;line-height:39px;font-size:26px;color:#666;">8fc736c0c97f</div>
<div class="t " style="left:2444.8px;top:648.5px;height:39px;line-height:39px;font-size:26px;color:#666;width:362.4px;text-align:center;">2021-09-07 14:55:01</div>
<div class="t " style="left:499.9px;top:726.5px;height:39px;line-height:39px;font-size:26px;color:#666;">941</div>
<div class="t " style="left:686.0px;top:727.8px;height:39px;line-height:39px;font-size:26px;color:#666;">获得幸运星</div>
<div class="t " style="left:1044.0px;top:726.5px;height:39px;line-height:39px;font-size:26px;color:#666;">0.00</div>
<div class="t " style="left:1401.7px;top:726.5px;height:39px;line-height:39px;font-size:26px;color:#666;">0.58</div>
<div class="t " style="left:1760.0px;top:727.8px;height:39px;line-height:39px;font-size:26px;color:#666;">获得0.579颗幸运星</div>
<div class="t " style="left:2117.8px;top:726.5px;height:39px;line-height:39px;font-size:26px;color:#666;">36f0773d9f25</div>
<div class="t " style="left:2444.8px;top:726.5px;height:39px;line-height:39px;font-size:26px;color:#666;width:362.4px;text-align:center;">2021-09-07 13:55:01</div>
<div class="t " style="left:499.9px;top:804.5px;height:39px;line-height:39px;font-size:26px;color:#666;">882</div>
<div class="t " style="left:686.0px;top:805.8px;height:39px;line-height:39px;font-size:26px;color:#666;">获得幸运星</div>
<div class="t " style="left:1044.0px;top:804.5px;height:39px;line-height:39px;font-size:26px;color:#666;">0.00</div>
<div class="t " style="left:1401.7px;top:804.5px;height:39px;line-height:39px;font-size:26px;color:#666;">0.58</div>
<div class="t " style="left:1760.0px;top:805.8px;height:39px;line-height:39px;font-size:26px;color:#666;">获得0.579颗幸运星</div>
<div class="t " style="left:2117.8px;top:805.8px;height:39px;line-height:39px;font-size:26px;color:#666;">丘处机</div>
<div class="t " style="left:2444.8px;top:804.5px;height:39px;line-height:39px;font-size:26px;color:#666;width:362.4px;text-align:center;">2021-09-07 13:45:01</div>
<div class="t " style="left:499.9px;top:882.5px;height:39px;line-height:39px;font-size:26px;color:#666;">853</div>
<div class="t " style="left:686.0px;top:883.8px;height:39px;line-height:39px;font-size:26px;color:#666;">获得幸运星</div>
<div class="t " style="left:1044.0px;top:882.5px;height:39px;line-height:39px;font-size:26px;color:#666;">0.00</div>
<div class="t " style="left:1401.7px;top:882.5px;height:39px;line-height:39px;font-size:26px;color:#666;">0.58</div>
<div class="t " style="left:1760.0px;top:883.8px;height:39px;line-height:39px;font-size:26px;color:#666;">获得0.579颗幸运星</div>
<div class="t " style="left:2117.8px;top:882.5px;height:39px;line-height:39px;font-size:26px;color:#666;">bc36ab29e7bb</div>
<div class="t " style="left:2444.8px;top:882.5px;height:39px;line-height:39px;font-size:26px;color:#666;width:362.4px;text-align:center;">2021-09-07 13:40:01</div>
<svg class="ic" style="left:502.2px;top:969.5px;width:16px;height:25px;" viewBox="0 0 16 25"><path d="M14.2 1 L2 12.5 L14.2 24" fill="none" stroke="#333" stroke-width="2.2"/></svg>
<div class="b" style="left:548.0px;top:956.0px;width:61.0px;height:52.0px;background:#009688;border-radius:4px;"></div>
<div class="t " style="left:548.0px;top:964.0px;height:36px;line-height:36px;font-size:24px;color:#fff;width:61.0px;text-align:center;">1</div>
<svg class="ic" style="left:639.2px;top:969.5px;width:16px;height:25px;" viewBox="0 0 16 25"><path d="M1.8 1 L14 12.5 L1.8 24" fill="none" stroke="#333" stroke-width="2.2"/></svg>
<div class="t " style="left:685.0px;top:965.6px;height:36px;line-height:36px;font-size:24px;color:#333;">到第</div>
<div class="b" style="left:753.3px;top:956.0px;width:79.4px;height:51.8px;border:2px solid #e2e2e2;border-radius:4px;box-sizing:border-box;background:#fff;"></div>
<div class="t " style="left:753.3px;top:964.0px;height:36px;line-height:36px;font-size:24px;color:#333;width:79.4px;text-align:center;">1</div>
<div class="t " style="left:852.8px;top:965.6px;height:36px;line-height:36px;font-size:24px;color:#333;">页</div>
<div class="b" style="left:897.4px;top:956.0px;width:91.1px;height:51.8px;border:2px solid #e2e2e2;border-radius:4px;box-sizing:border-box;background:#fff;"></div>
<div class="t " style="left:897.4px;top:968.0px;height:36px;line-height:36px;font-size:24px;color:#333;width:91.1px;text-align:center;">确定</div>
<div class="t " style="left:1009.0px;top:965.6px;height:36px;line-height:36px;font-size:24px;color:#333;">共 4 条</div>
<div class="b" style="left:1104.3px;top:956.0px;width:148.4px;height:66.0px;border:2px solid #e2e2e2;border-bottom:none;border-radius:4px 4px 0 0;box-sizing:border-box;background:#fff;"></div>
<div class="t " style="left:1119.5px;top:974.2px;height:36px;line-height:36px;font-size:24px;color:#333;">20 条/页</div>
<svg class="ic" style="left:1224px;top:983px;width:20px;height:14px;" viewBox="0 0 20 14"><path d="M2 2.6 L10 11 L18 2.6" fill="none" stroke="#333" stroke-width="2.2"/></svg>
<svg class="ic" style="left:1085px;top:385px;width:80px;height:80px;" viewBox="-40 -40 80 80"><g transform="rotate(0)" fill="#e8472f"><path d="M0.9 -9 C0.9 -15 1.2 -22 2.6 -28.5 C3.8 -33.5 7.5 -36 11.4 -36 C16.5 -36 19.8 -32 19.8 -27.5 C19.8 -20 10 -13.5 0.9 -9 Z"/><path d="M-0.9 -9 C-0.9 -15 -1.2 -22 -2.6 -28.5 C-3.8 -33.5 -7.5 -36 -11.4 -36 C-16.5 -36 -19.8 -32 -19.8 -27.5 C-19.8 -20 -10 -13.5 -0.9 -9 Z"/></g><g transform="rotate(90)" fill="#f8ab00"><path d="M0.9 -9 C0.9 -15 1.2 -22 2.6 -28.5 C3.8 -33.5 7.5 -36 11.4 -36 C16.5 -36 19.8 -32 19.8 -27.5 C19.8 -20 10 -13.5 0.9 -9 Z"/><path d="M-0.9 -9 C-0.9 -15 -1.2 -22 -2.6 -28.5 C-3.8 -33.5 -7.5 -36 -11.4 -36 C-16.5 -36 -19.8 -32 -19.8 -27.5 C-19.8 -20 -10 -13.5 -0.9 -9 Z"/></g><g transform="rotate(180)" fill="#5ab531"><path d="M0.9 -9 C0.9 -15 1.2 -22 2.6 -28.5 C3.8 -33.5 7.5 -36 11.4 -36 C16.5 -36 19.8 -32 19.8 -27.5 C19.8 -20 10 -13.5 0.9 -9 Z"/><path d="M-0.9 -9 C-0.9 -15 -1.2 -22 -2.6 -28.5 C-3.8 -33.5 -7.5 -36 -11.4 -36 C-16.5 -36 -19.8 -32 -19.8 -27.5 C-19.8 -20 -10 -13.5 -0.9 -9 Z"/></g><g transform="rotate(270)" fill="#00a9ea"><path d="M0.9 -9 C0.9 -15 1.2 -22 2.6 -28.5 C3.8 -33.5 7.5 -36 11.4 -36 C16.5 -36 19.8 -32 19.8 -27.5 C19.8 -20 10 -13.5 0.9 -9 Z"/><path d="M-0.9 -9 C-0.9 -15 -1.2 -22 -2.6 -28.5 C-3.8 -33.5 -7.5 -36 -11.4 -36 C-16.5 -36 -19.8 -32 -19.8 -27.5 C-19.8 -20 -10 -13.5 -0.9 -9 Z"/></g><path d="M-5.4 0.2 C-4.6 -4 -1 -7 3 -7 C7.6 -7 10.6 -3.6 10.6 0.2 C10.6 4 7.6 7.4 3 7.4 C-1 7.4 -4.6 4.4 -5.4 0.2 Z" fill="#f8ab00"/><path d="M-1.6 -6.6 Q2.4 0.2 -1.6 7 M3.8 -7.4 Q7.6 0.2 3.8 7.8" stroke="#fff" stroke-width="1.5" fill="none"/></svg>
<div class="t" style="left:1172.5px;top:386.1px;height:96px;line-height:96px;font-size:70px;font-weight:900;color:#444;letter-spacing:2px;transform:scale(1,0.955);transform-origin:0 12px;">码商网</div>
</body></html>
